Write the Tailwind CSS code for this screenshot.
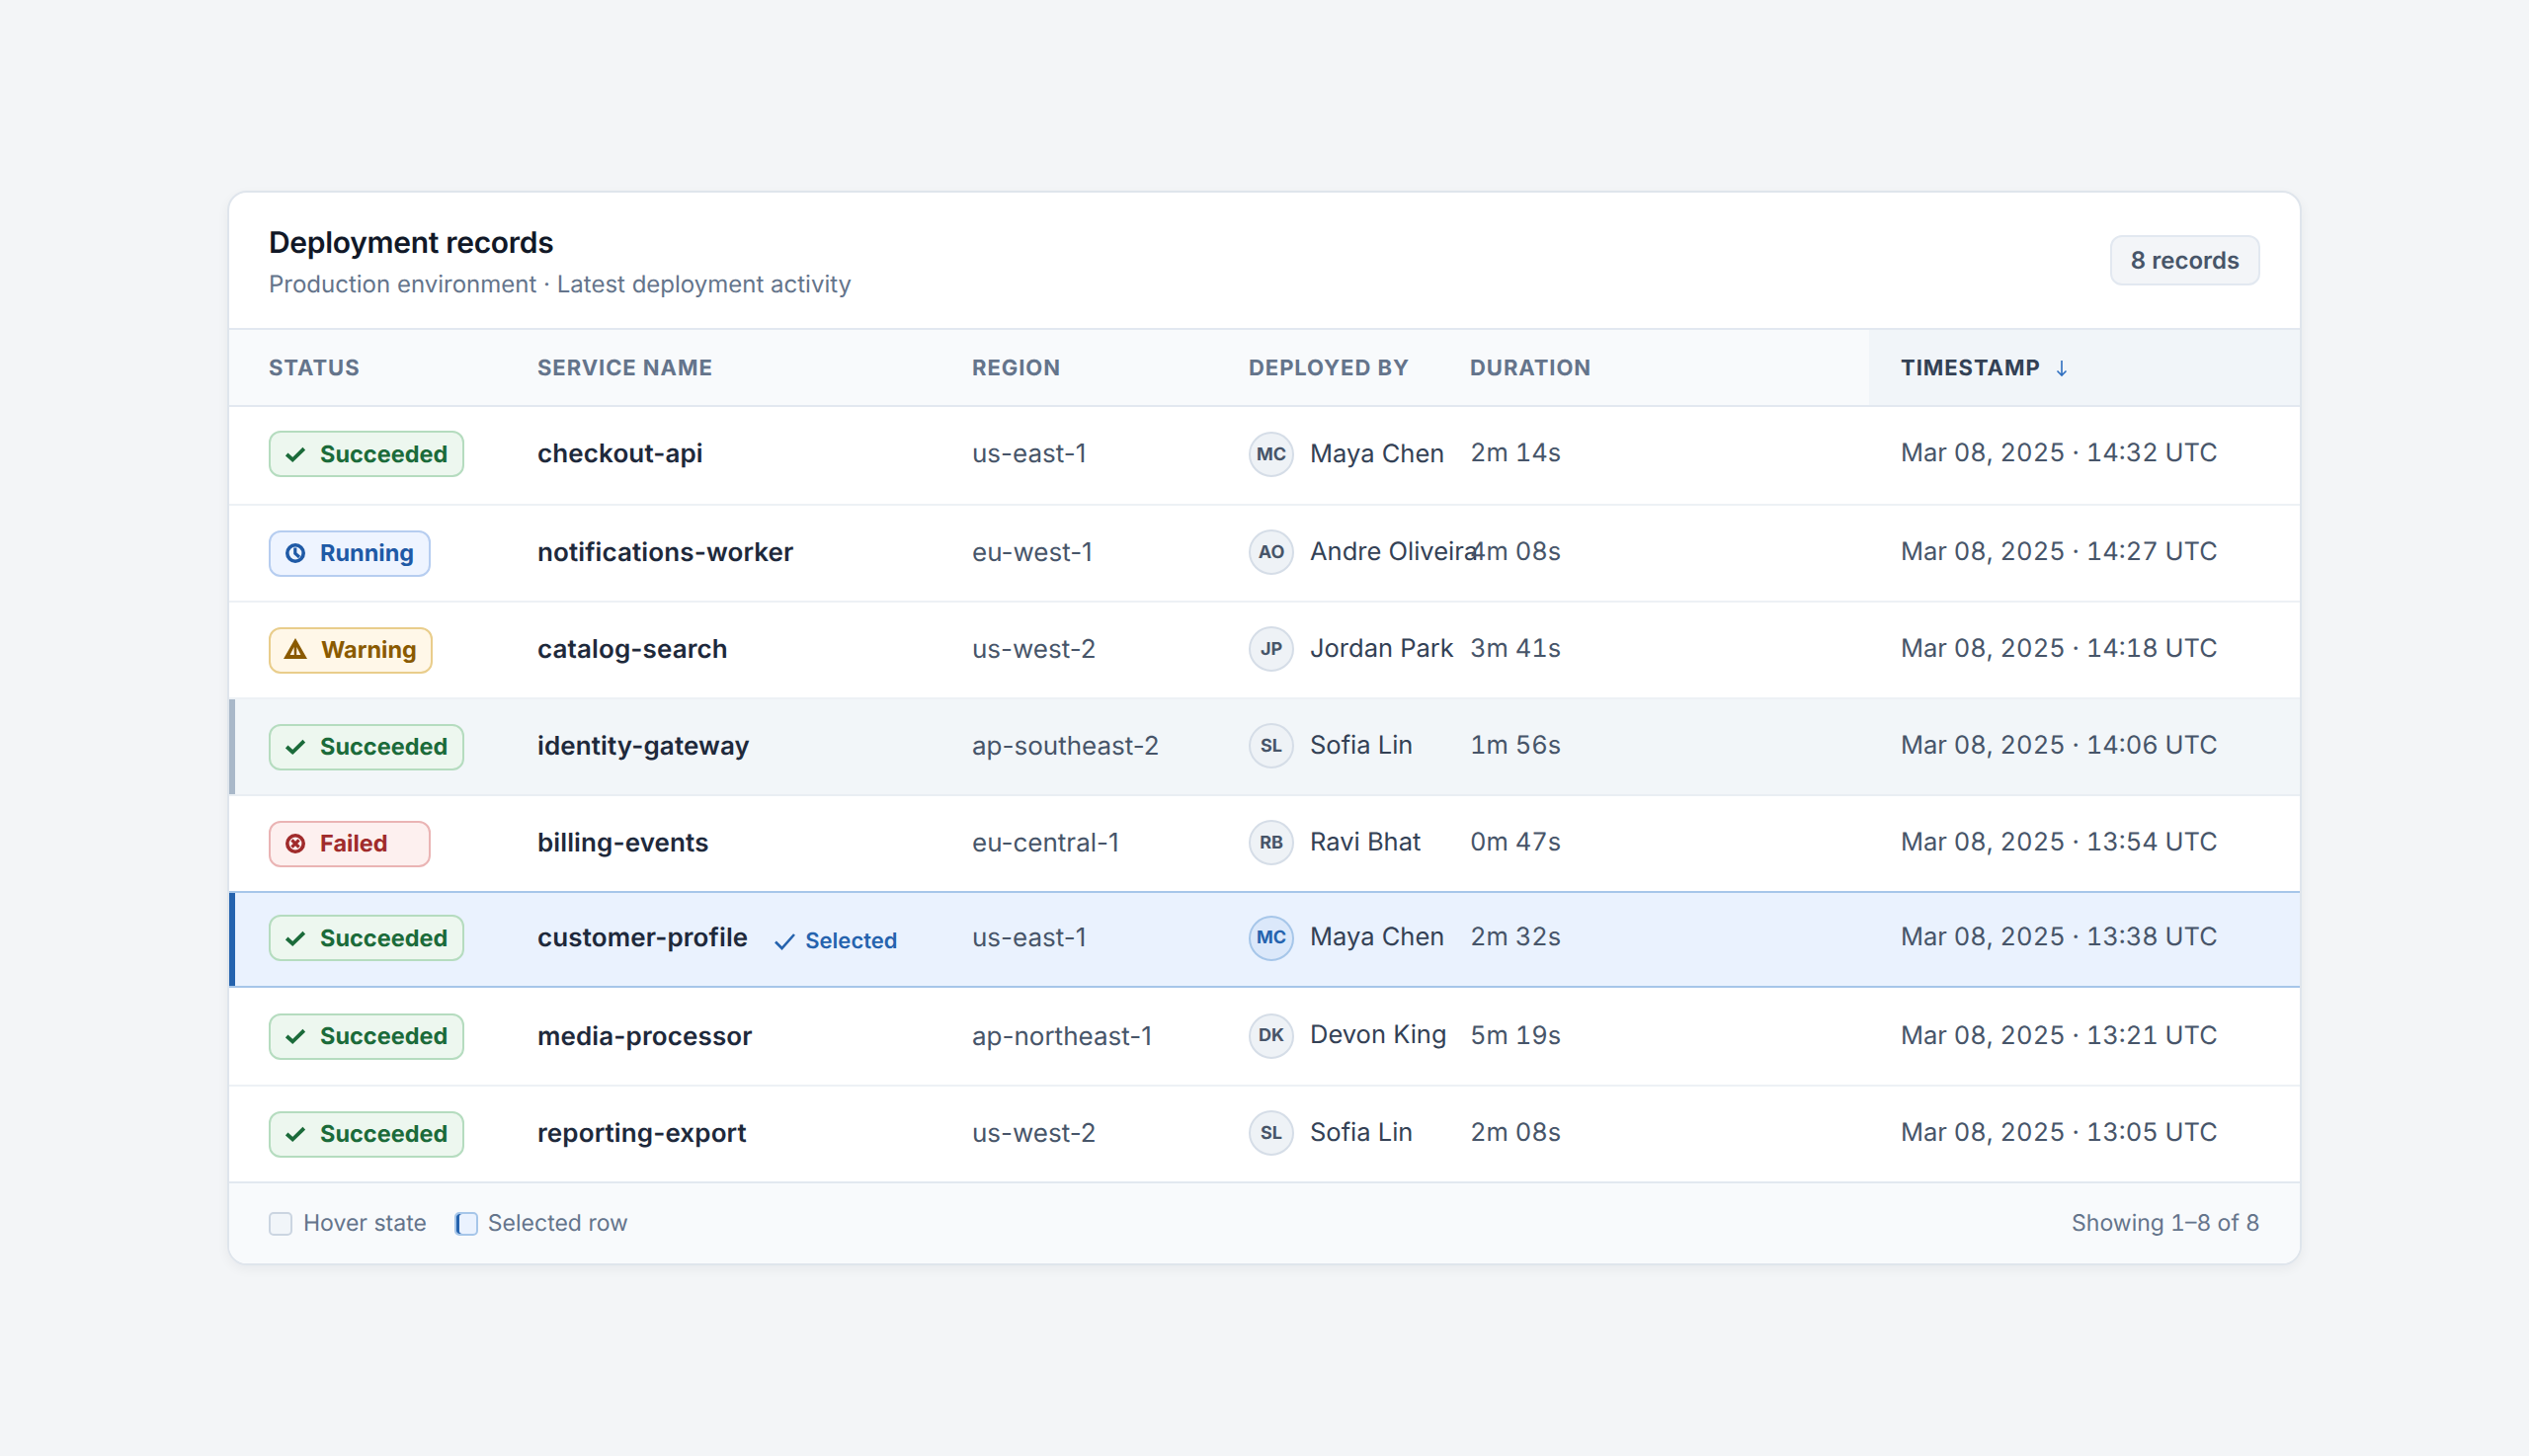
<!DOCTYPE html>
<html lang="en">

<head>
    <meta charset="UTF-8">
    <meta name="viewport" content="width=device-width, initial-scale=1.0">
    <title>Deployment records</title>
    <script src="https://cdn.jsdelivr.net/npm/@tailwindcss/browser@4"></script>
</head>

<body class="m-0 flex h-[1474px] items-center justify-center bg-[#f3f5f7] font-['Inter',sans-serif] antialiased [text-rendering:geometricPrecision]">

    <div class="w-[2100px] h-[1088px] overflow-hidden rounded-[20px] border-2 border-[#dfe5ec] bg-white shadow-[0_4px_12px_rgba(15,23,42,0.05)]">

        <!-- Card header -->
        <div class="flex h-[139px] items-center justify-between border-b-2 border-[#e2e8f0] pl-[40px] pr-[40px]">
            <div class="pt-[3px]">
                <h1 class="text-[30px] leading-[42px] font-semibold tracking-[-0.3px] text-[#111827]">Deployment records</h1>
                <p class="mt-[4px] text-[24px] leading-[34px] text-[#64748b]">Production environment · Latest deployment activity</p>
            </div>
            <span class="flex h-[51px] w-[152px] items-center justify-center rounded-[12px] border-2 border-[#e2e8f0] bg-[#f3f5f8] text-[24px] font-semibold text-[#475569]">8 records</span>
        </div>

        <!-- Records table -->
        <table class="w-[2096px] table-fixed border-separate border-spacing-0 text-left">
            <colgroup>
                <col class="w-[280px]">
                <col class="w-[440px]">
                <col class="w-[280px]">
                <col class="w-[224px]">
                <col class="w-[436px]">
                <col class="w-[436px]">
            </colgroup>
            <thead>
                <tr class="h-[78px] bg-[#f8fafc] text-[22px] tracking-[0.95px] text-[#64748b]">
                    <th class="border-b-2 border-[#e2e8f0] pt-[2px] pl-[40px] font-[650]">STATUS</th>
                    <th class="border-b-2 border-[#e2e8f0] pt-[2px] pl-[32px] font-[650]">SERVICE NAME</th>
                    <th class="border-b-2 border-[#e2e8f0] pt-[2px] pl-[32px] font-[650]">REGION</th>
                    <th class="border-b-2 border-[#e2e8f0] pt-[2px] pl-[32px] font-[650]">DEPLOYED BY</th>
                    <th class="border-b-2 border-[#e2e8f0] pt-[2px] pl-[32px] font-[650]">DURATION</th>
                    <th class="border-b-2 border-[#e2e8f0] bg-[#f1f5f9] pt-[2px] pl-[32px] font-[650] text-[#334155]">
                        <span class="flex items-center gap-[14px]">TIMESTAMP
                            <svg class="h-[18px] w-[14px]" viewBox="0 0 14 18" fill="none" stroke="#2f6fc0" stroke-width="1.6"><path d="M7 1v15M2.5 11.5 7 16l4.5-4.5" /></svg>
                        </span>
                    </th>
                </tr>
            </thead>
            <tbody class="text-[26px] text-[#475569]">
                <tr class="h-[100px]">
                    <td class="border-b-2 border-[#edf1f5] pb-[3px] pl-[40px]">
                        <span class="flex h-[47px] w-[198px] items-center gap-[15px] rounded-[12px] border-2 border-[#b5dcbf] bg-[#edf7ef] pl-[15px] text-[23.5px] font-[650] text-[#1b6b3a]">
                            <svg class="h-[20px] w-[20px] shrink-0" viewBox="0 0 20 20" fill="none" stroke="currentColor" stroke-width="3.8"><path d="M1.2 10 7.2 15.5 18.8 4.2" /></svg>Succeeded
                        </span>
                    </td>
                    <td class="border-b-2 border-[#edf1f5] pb-[4px] pl-[32px] font-semibold tracking-[0.12px] text-[#1e293b]">checkout-api</td>
                    <td class="border-b-2 border-[#edf1f5] pb-[4px] pl-[32px]">us-east-1</td>
                    <td class="border-b-2 border-[#edf1f5] pb-[2px] pl-[32px]">
                        <span class="flex items-center gap-[16px] whitespace-nowrap text-[25.5px] text-[#334155]"><span class="flex h-[46px] w-[46px] shrink-0 items-center justify-center rounded-full border-2 border-[#d5dde7] bg-[#eef2f6] text-[18px] font-bold text-[#475569]">MC</span><span>Maya Chen</span></span>
                    </td>
                    <td class="border-b-2 border-[#edf1f5] pb-[3px] pl-[32px] text-[25.5px] tabular-nums">2m 14s</td>
                    <td class="border-b-2 border-[#edf1f5] pb-[3px] pl-[32px] text-[25.5px] tabular-nums">Mar 08, 2025 · 14:32 UTC</td>
                </tr>
                <tr class="h-[98px]">
                    <td class="border-b-2 border-[#edf1f5] pl-[40px]">
                        <span class="flex h-[47px] w-[164px] items-center gap-[15px] rounded-[12px] border-2 border-[#b6cdf0] bg-[#eef4ff] pl-[15px] text-[23.5px] font-[650] text-[#1f5aa6]">
                            <svg class="h-[20px] w-[20px] shrink-0" viewBox="0 0 20 20" fill="none" stroke="currentColor" stroke-width="3.6"><circle cx="10" cy="10" r="8.2" /><path d="M9.8 4.5V10.2l4.2 3.8" stroke-width="3.2" /></svg>Running
                        </span>
                    </td>
                    <td class="border-b-2 border-[#edf1f5] pb-[2px] pl-[32px] font-semibold tracking-[0.12px] text-[#1e293b]">notifications-worker</td>
                    <td class="border-b-2 border-[#edf1f5] pb-[2px] pl-[32px]">eu-west-1</td>
                    <td class="border-b-2 border-[#edf1f5] pb-[2px] pl-[32px]">
                        <span class="flex items-center gap-[16px] whitespace-nowrap text-[25.5px] text-[#334155]"><span class="flex h-[46px] w-[46px] shrink-0 items-center justify-center rounded-full border-2 border-[#d5dde7] bg-[#eef2f6] text-[18px] font-bold text-[#475569]">AO</span><span>Andre Oliveira</span></span>
                    </td>
                    <td class="border-b-2 border-[#edf1f5] pb-[1px] pl-[32px] text-[25.5px] tabular-nums">4m 08s</td>
                    <td class="border-b-2 border-[#edf1f5] pb-[1px] pl-[32px] text-[25.5px] tabular-nums">Mar 08, 2025 · 14:27 UTC</td>
                </tr>
                <tr class="h-[98px]">
                    <td class="border-b-2 border-[#edf1f5] pl-[40px]">
                        <span class="flex h-[47px] w-[166px] items-center gap-[14px] rounded-[12px] border-2 border-[#e9cd8b] bg-[#fff7e8] pl-[13px] text-[23.5px] font-[650] text-[#8a5a00]">
                            <svg class="mb-[3px] h-[21px] w-[24px] shrink-0" viewBox="0 0 24 21" fill="currentColor"><path fill-rule="evenodd" d="M12 0 24 21H0ZM10.6 9 6.6 17H10.8ZM13.4 9 13.2 17H17.4Z" /></svg>Warning
                        </span>
                    </td>
                    <td class="border-b-2 border-[#edf1f5] pb-[2px] pl-[32px] font-semibold tracking-[0.12px] text-[#1e293b]">catalog-search</td>
                    <td class="border-b-2 border-[#edf1f5] pb-[2px] pl-[32px]">us-west-2</td>
                    <td class="border-b-2 border-[#edf1f5] pb-[2px] pl-[32px]">
                        <span class="flex items-center gap-[16px] whitespace-nowrap text-[25.5px] text-[#334155]"><span class="flex h-[46px] w-[46px] shrink-0 items-center justify-center rounded-full border-2 border-[#d5dde7] bg-[#eef2f6] text-[18px] font-bold text-[#475569]">JP</span><span>Jordan Park</span></span>
                    </td>
                    <td class="border-b-2 border-[#edf1f5] pb-[1px] pl-[32px] text-[25.5px] tabular-nums">3m 41s</td>
                    <td class="border-b-2 border-[#edf1f5] pb-[1px] pl-[32px] text-[25.5px] tabular-nums">Mar 08, 2025 · 14:18 UTC</td>
                </tr>
                <!-- hover state row -->
                <tr class="h-[98px] bg-[#f2f6f9]">
                    <td class="border-b-2 border-[#e9eef3] pl-[40px] shadow-[inset_6px_0_0_#a9b8c9]">
                        <span class="flex h-[47px] w-[198px] items-center gap-[15px] rounded-[12px] border-2 border-[#b5dcbf] bg-[#edf7ef] pl-[15px] text-[23.5px] font-[650] text-[#1b6b3a]">
                            <svg class="h-[20px] w-[20px] shrink-0" viewBox="0 0 20 20" fill="none" stroke="currentColor" stroke-width="3.8"><path d="M1.2 10 7.2 15.5 18.8 4.2" /></svg>Succeeded
                        </span>
                    </td>
                    <td class="border-b-2 border-[#e9eef3] pb-[2px] pl-[32px] font-semibold tracking-[0.12px] text-[#1e293b]">identity-gateway</td>
                    <td class="border-b-2 border-[#e9eef3] pb-[2px] pl-[32px]">ap-southeast-2</td>
                    <td class="border-b-2 border-[#e9eef3] pb-[2px] pl-[32px]">
                        <span class="flex items-center gap-[16px] whitespace-nowrap text-[25.5px] text-[#334155]"><span class="flex h-[46px] w-[46px] shrink-0 items-center justify-center rounded-full border-2 border-[#d5dde7] bg-[#eef2f6] text-[18px] font-bold text-[#475569]">SL</span><span>Sofia Lin</span></span>
                    </td>
                    <td class="border-b-2 border-[#e9eef3] pb-[1px] pl-[32px] text-[25.5px] tabular-nums">1m 56s</td>
                    <td class="border-b-2 border-[#e9eef3] pb-[1px] pl-[32px] text-[25.5px] tabular-nums">Mar 08, 2025 · 14:06 UTC</td>
                </tr>
                <tr class="h-[98px]">
                    <td class="border-b-2 border-[#a6c6e9] pl-[40px]">
                        <span class="flex h-[47px] w-[164px] items-center gap-[15px] rounded-[12px] border-2 border-[#eab4b4] bg-[#fdf0ef] pl-[15px] text-[23.5px] font-[650] text-[#a02b2b]">
                            <svg class="h-[20px] w-[20px] shrink-0" viewBox="0 0 20 20" fill="none" stroke="currentColor" stroke-width="3.6"><circle cx="10" cy="10" r="8.2" /><path d="m6.4 6.4 7.2 7.2M13.6 6.4l-7.2 7.2" stroke-width="3.2" /></svg>Failed
                        </span>
                    </td>
                    <td class="border-b-2 border-[#a6c6e9] pb-[2px] pl-[32px] font-semibold tracking-[0.12px] text-[#1e293b]">billing-events</td>
                    <td class="border-b-2 border-[#a6c6e9] pb-[2px] pl-[32px]">eu-central-1</td>
                    <td class="border-b-2 border-[#a6c6e9] pb-[2px] pl-[32px]">
                        <span class="flex items-center gap-[16px] whitespace-nowrap text-[25.5px] text-[#334155]"><span class="flex h-[46px] w-[46px] shrink-0 items-center justify-center rounded-full border-2 border-[#d5dde7] bg-[#eef2f6] text-[18px] font-bold text-[#475569]">RB</span><span>Ravi Bhat</span></span>
                    </td>
                    <td class="border-b-2 border-[#a6c6e9] pb-[1px] pl-[32px] text-[25.5px] tabular-nums">0m 47s</td>
                    <td class="border-b-2 border-[#a6c6e9] pb-[1px] pl-[32px] text-[25.5px] tabular-nums">Mar 08, 2025 · 13:54 UTC</td>
                </tr>
                <!-- selected row -->
                <tr class="h-[96px] bg-[#eaf2fe]">
                    <td class="border-b-2 border-[#a6c6e9] pb-[3px] pl-[40px] shadow-[inset_6px_0_0_#2563ae]">
                        <span class="flex h-[47px] w-[198px] items-center gap-[15px] rounded-[12px] border-2 border-[#b5dcbf] bg-[#edf7ef] pl-[15px] text-[23.5px] font-[650] text-[#1b6b3a]">
                            <svg class="h-[20px] w-[20px] shrink-0" viewBox="0 0 20 20" fill="none" stroke="currentColor" stroke-width="3.8"><path d="M1.2 10 7.2 15.5 18.8 4.2" /></svg>Succeeded
                        </span>
                    </td>
                    <td class="border-b-2 border-[#a6c6e9] pb-[4px] pl-[32px]">
                        <span class="flex items-center gap-[27px] whitespace-nowrap font-semibold tracking-[0.12px] text-[#1e293b]">customer-profile
                            <span class="mt-[8px] flex items-center gap-[10px] text-[22px] tracking-normal text-[#2563ae]">
                                <svg class="h-[18px] w-[21px]" viewBox="0 0 21 18" fill="none" stroke="currentColor" stroke-width="2.6"><path d="M1 9.5 7.5 16 20 2" /></svg>Selected
                            </span>
                        </span>
                    </td>
                    <td class="border-b-2 border-[#a6c6e9] pb-[4px] pl-[32px]">us-east-1</td>
                    <td class="border-b-2 border-[#a6c6e9] pb-[3px] pl-[32px]">
                        <span class="flex items-center gap-[16px] whitespace-nowrap text-[25.5px] text-[#334155]"><span class="flex h-[46px] w-[46px] shrink-0 items-center justify-center rounded-full border-2 border-[#a6c6e9] bg-[#dbe8fa] text-[18px] font-bold text-[#2563ae]">MC</span><span>Maya Chen</span></span>
                    </td>
                    <td class="border-b-2 border-[#a6c6e9] pb-[3px] pl-[32px] text-[25.5px] tabular-nums">2m 32s</td>
                    <td class="border-b-2 border-[#a6c6e9] pb-[3px] pl-[32px] text-[25.5px] tabular-nums">Mar 08, 2025 · 13:38 UTC</td>
                </tr>
                <tr class="h-[100px]">
                    <td class="border-b-2 border-[#edf1f5] pl-[40px]">
                        <span class="flex h-[47px] w-[198px] items-center gap-[15px] rounded-[12px] border-2 border-[#b5dcbf] bg-[#edf7ef] pl-[15px] text-[23.5px] font-[650] text-[#1b6b3a]">
                            <svg class="h-[20px] w-[20px] shrink-0" viewBox="0 0 20 20" fill="none" stroke="currentColor" stroke-width="3.8"><path d="M1.2 10 7.2 15.5 18.8 4.2" /></svg>Succeeded
                        </span>
                    </td>
                    <td class="border-b-2 border-[#edf1f5] pl-[32px] font-semibold tracking-[0.12px] text-[#1e293b]">media-processor</td>
                    <td class="border-b-2 border-[#edf1f5] pl-[32px]">ap-northeast-1</td>
                    <td class="border-b-2 border-[#edf1f5] pb-[1px] pl-[32px]">
                        <span class="flex items-center gap-[16px] whitespace-nowrap text-[25.5px] text-[#334155]"><span class="flex h-[46px] w-[46px] shrink-0 items-center justify-center rounded-full border-2 border-[#d5dde7] bg-[#eef2f6] text-[18px] font-bold text-[#475569]">DK</span><span>Devon King</span></span>
                    </td>
                    <td class="border-b-2 border-[#edf1f5] pl-[32px] text-[25.5px] tabular-nums">5m 19s</td>
                    <td class="border-b-2 border-[#edf1f5] pl-[32px] text-[25.5px] tabular-nums">Mar 08, 2025 · 13:21 UTC</td>
                </tr>
                <tr class="h-[96px]">
                    <td class="pl-[40px]">
                        <span class="flex h-[47px] w-[198px] items-center gap-[15px] rounded-[12px] border-2 border-[#b5dcbf] bg-[#edf7ef] pl-[15px] text-[23.5px] font-[650] text-[#1b6b3a]">
                            <svg class="h-[20px] w-[20px] shrink-0" viewBox="0 0 20 20" fill="none" stroke="currentColor" stroke-width="3.8"><path d="M1.2 10 7.2 15.5 18.8 4.2" /></svg>Succeeded
                        </span>
                    </td>
                    <td class="pb-[2px] pl-[32px] font-semibold tracking-[0.12px] text-[#1e293b]">reporting-export</td>
                    <td class="pb-[2px] pl-[32px]">us-west-2</td>
                    <td class="pb-[2px] pl-[32px]">
                        <span class="flex items-center gap-[16px] whitespace-nowrap text-[25.5px] text-[#334155]"><span class="flex h-[46px] w-[46px] shrink-0 items-center justify-center rounded-full border-2 border-[#d5dde7] bg-[#eef2f6] text-[18px] font-bold text-[#475569]">SL</span><span>Sofia Lin</span></span>
                    </td>
                    <td class="pb-[1px] pl-[32px] text-[25.5px] tabular-nums">2m 08s</td>
                    <td class="pb-[1px] pl-[32px] text-[25.5px] tabular-nums">Mar 08, 2025 · 13:05 UTC</td>
                </tr>
            </tbody>
        </table>

        <!-- Footer -->
        <div class="flex h-[83px] items-center justify-between border-t-2 border-[#e2e8f0] bg-[#f8fafc] px-[40px] text-[23px] text-[#64748b]">
            <div class="flex items-center">
                <span class="h-[24px] w-[24px] rounded-[5px] border-2 border-[#cbd5e1] bg-[#f1f5f9]"></span>
                <span class="ml-[11px]">Hover state</span>
                <span class="ml-[28px] h-[24px] w-[24px] rounded-[5px] border-2 border-[#a6c6e9] bg-[#eaf2fe] shadow-[inset_3px_0_0_#2563ae]"></span>
                <span class="ml-[10px]">Selected row</span>
            </div>
            <span class="tabular-nums">Showing 1–8 of 8</span>
        </div>
    </div>

</body>

</html>
